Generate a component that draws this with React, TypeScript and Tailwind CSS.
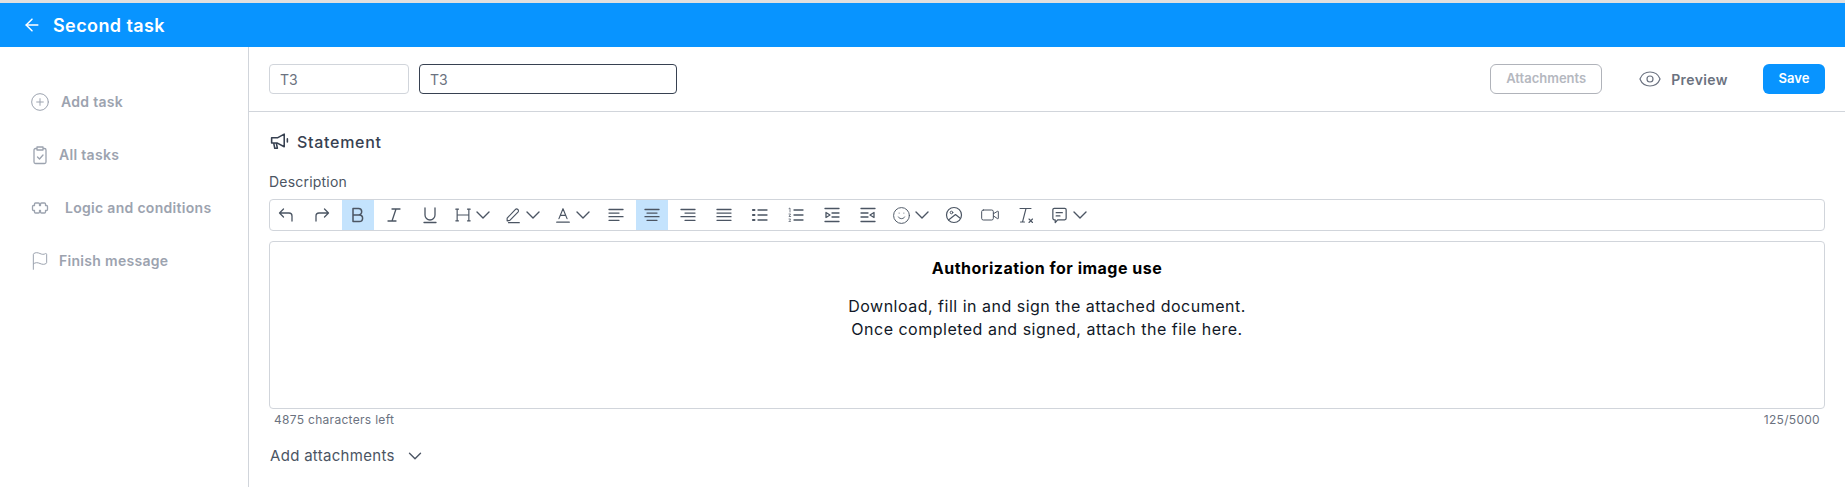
import type { ReactNode } from "react";
import { ArrowLeft, ChevronDown, CirclePlus, Eye, Flag, Smile, Video } from "lucide-react";

const Ico = ({ children, size = 20, color = "#4b5563" }: { children: ReactNode; size?: number; color?: string }) => (
  <svg
    width={size}
    height={size}
    viewBox="0 0 20 20"
    fill="none"
    stroke={color}
    strokeWidth="1.3"
    strokeLinecap="round"
    strokeLinejoin="round"
    className="shrink-0"
  >
    {children}
  </svg>
);

const Lines = ({ rows }: { rows: [number, number][] }) => (
  <Ico>
    {rows.map(([a, b], i) => (
      <path key={i} d={`M${a} ${4.5 + i * 3.6}H${b}`} />
    ))}
  </Ico>
);

const Chevron = () => (
  <ChevronDown size={24} strokeWidth={1.4} color="#4b5563" className="-ml-[1px] shrink-0" />
);

const ToolButton = ({
  children,
  active,
  wide,
}: {
  children: ReactNode;
  active?: boolean;
  wide?: boolean;
}) => (
  <div
    className={`flex h-[30px] items-center justify-center ${wide ? "w-[46px] pl-[3px]" : "w-8"} ${
      active ? "bg-[#c4e3fd]" : ""
    }`}
  >
    {children}
  </div>
);

const Toolbar = () => (
  <div className="flex h-8 items-center gap-1 rounded border border-[#d1d5db]">
    <ToolButton>
      <Ico>
        <path d="M3.500 8 7.500 4M3.500 8l4 4M3.500 8H13a3 3 0 0 1 3 3v5" />
      </Ico>
    </ToolButton>
    <ToolButton>
      <Ico>
        <path d="M16.500 8l-4-4M16.500 8l-4 4M16.500 8H7a3 3 0 0 0-3 3v5" />
      </Ico>
    </ToolButton>
    <ToolButton active>
      <Ico>
        <path d="M5 3.500h5.500a3.200 3.200 0 0 1 0 6.400H5zM5 9.900h6.300a3.300 3.300 0 0 1 0 6.600H5z" strokeWidth="1.5" />
      </Ico>
    </ToolButton>
    <ToolButton>
      <Ico>
        <path d="M8 4h8M4 16h8M12 4 8 16" />
      </Ico>
    </ToolButton>
    <ToolButton>
      <Ico>
        <path d="M5 3v7a5 5 0 0 0 10 0V3M4 17.500h12" />
      </Ico>
    </ToolButton>
    <ToolButton wide>
      <Ico size={18}>
        <path d="M3.500 3.500v13M16.500 3.500v13M3.500 10h13M2 3.500h3M2 16.500h3M15 3.500h3M15 16.500h3" />
      </Ico>
      <Chevron />
    </ToolButton>
    <ToolButton wide>
      <Ico size={18}>
        <path d="M3.500 13.500 12.500 4a2 2 0 0 1 3 2.800L6.500 16l-3 .5zM5 18.500h12" />
      </Ico>
      <Chevron />
    </ToolButton>
    <ToolButton wide>
      <Ico size={18}>
        <path d="M5.500 14 10 3 14.500 14M7 10.500h6M3 18h14" />
      </Ico>
      <Chevron />
    </ToolButton>
    <ToolButton>
      <Lines rows={[[3, 17], [3, 13], [3, 17], [3, 13]]} />
    </ToolButton>
    <ToolButton active>
      <Lines rows={[[3, 17], [5, 15], [3, 17], [5, 15]]} />
    </ToolButton>
    <ToolButton>
      <Lines rows={[[3, 17], [7, 17], [3, 17], [7, 17]]} />
    </ToolButton>
    <ToolButton>
      <Lines rows={[[3, 17], [3, 17], [3, 17], [3, 17]]} />
    </ToolButton>
    <ToolButton>
      <Ico>
        <path d="M8 5h9M8 10h9M8 15h9" />
        <path d="M3 5h1.400M3 10h1.400M3 15h1.400" strokeWidth="2.200" />
      </Ico>
    </ToolButton>
    <ToolButton>
      <Ico>
        <path d="M8 5h9M8 10h9M8 15h9" />
        <path d="M3 3.500 4 3v4M3 9h1.600L3 11.500h1.700M3 14h1.600l-.8 1.200.8 1.300H3" strokeWidth="0.700" />
      </Ico>
    </ToolButton>
    <ToolButton>
      <Ico>
        <path d="M3 3.500h14M10 8h7M10 12h7M3 16.500h14M4 7.500l4 2.500-4 2.500z" />
      </Ico>
    </ToolButton>
    <ToolButton>
      <Ico>
        <path d="M3 3.500h14M3 8h7M3 12h7M3 16.500h14M16 7.500l-4 2.500 4 2.500z" />
      </Ico>
    </ToolButton>
    <ToolButton wide>
      <Smile size={19} strokeWidth={1.2} color="#4b5563" className="shrink-0" />
      <Chevron />
    </ToolButton>
    <ToolButton>
      <Ico>
        <circle cx="10" cy="10" r="7.500" strokeWidth="1.200" />
        <circle cx="7.500" cy="7.500" r="1.300" strokeWidth="1" />
        <path d="M4.500 15 11.500 9.500 16.500 13.500" strokeWidth="1.100" />
      </Ico>
    </ToolButton>
    <ToolButton>
      <Video size={20} strokeWidth={1.2} color="#4b5563" />
    </ToolButton>
    <ToolButton>
      <Ico>
        <path d="M4 3.500h11M10 3.500 6.500 17M4.500 17h4M13 14l3.500 3.500M16.500 14 13 17.500" strokeWidth="1.100" />
      </Ico>
    </ToolButton>
    <ToolButton wide>
      <Ico size={19}>
        <path d="M4.500 2.500h11A1.500 1.500 0 0 1 17 4v9a1.500 1.500 0 0 1-1.500 1.500H8l-2.500 3v-3h-1A1.500 1.500 0 0 1 3 13V4a1.500 1.500 0 0 1 1.500-1.500zM6.500 7h6.500M6.500 10.500h4" />
      </Ico>
      <Chevron />
    </ToolButton>
  </div>
);

const NavItem = ({ icon, label, gap }: { icon: ReactNode; label: string; gap: string }) => (
  <div className={`flex h-[53px] items-center ${gap} text-[14px] font-semibold tracking-[0.3px] text-[#9ca3af]`}>
    {icon}
    <span>{label}</span>
  </div>
);

export default function App() {
  return (
    <div className="flex h-[487px] flex-col overflow-hidden bg-white font-['Inter','Liberation_Sans',sans-serif] text-[#374151]">
      <div className="h-[3px] shrink-0 bg-[#e0e0e0]" />
      <div className="flex h-[44px] shrink-0 items-center gap-[11px] bg-[#0894ff] pl-[22px] text-white">
        <ArrowLeft size={20} strokeWidth={1.8} />
        <span className="text-[18px] font-semibold tracking-[0.4px]">Second task</span>
      </div>
      <div className="flex min-h-0 flex-1">
        <aside className="w-[249px] shrink-0 border-r border-[#d1d5db] pl-[30px] pt-[28px]">
          <NavItem gap="gap-[11px]" label="Add task" icon={<CirclePlus size={20} strokeWidth={1.2} />} />
          <NavItem
            gap="gap-[9px]"
            label="All tasks"
            icon={
              <Ico color="#9ca3af">
                <path d="M7 3.500H5.500A1.500 1.500 0 0 0 4 5v12a1.500 1.500 0 0 0 1.500 1.500h9A1.500 1.500 0 0 0 16 17V5a1.500 1.500 0 0 0-1.500-1.500H13M7 2h6v3H7zM7.500 12l2 2 3.500-4" />
              </Ico>
            }
          />
          <NavItem
            gap="gap-[15px]"
            label="Logic and conditions"
            icon={
              <Ico color="#9ca3af">
                <path d="M4.500 7.500V6a1 1 0 0 1 1-1h3a1 1 0 0 1 1 1v1.500h1V6a1 1 0 0 1 1-1h3a1 1 0 0 1 1 1v1.500h1a1 1 0 0 1 1 1v3a1 1 0 0 1-1 1h-1V14a1 1 0 0 1-1 1h-3a1 1 0 0 1-1-1v-1.500h-1V14a1 1 0 0 1-1 1h-3a1 1 0 0 1-1-1v-1.500h-1a1 1 0 0 1-1-1v-3a1 1 0 0 1 1-1z" />
              </Ico>
            }
          />
          <NavItem gap="gap-[9px]" label="Finish message" icon={<Flag size={20} strokeWidth={1.2} />} />
        </aside>
        <main className="min-w-0 flex-1">
          <div className="flex h-[65px] items-center border-b border-[#d1d5db] pl-[20px] pr-[20px]">
            <div className="flex h-[30px] w-[140px] items-center rounded border border-[#d1d5db] px-[10px] text-[14px] text-[#6b7280]">
              T3
            </div>
            <div className="ml-[10px] flex h-[30px] w-[258px] items-center rounded border border-[#374151] px-[10px] text-[14px] text-[#6b7280]">
              T3
            </div>
            <div className="ml-auto flex h-[30px] w-[112px] items-center justify-center rounded-md border border-[#b0b3ba] text-[13px] font-semibold text-[#b5b8bf]">
              Attachments
            </div>
            <div className="ml-[36px] flex items-center gap-[9px] text-[14px] font-semibold tracking-[0.4px] text-[#6b7280]">
              <Eye size={24} strokeWidth={1.2} />
              Preview
            </div>
            <div className="ml-[35px] flex h-[30px] w-[62px] items-center justify-center rounded-md bg-[#0894ff] text-[13px] font-semibold text-white">
              Save
            </div>
          </div>
          <div className="pl-[20px] pr-[20px]">
            <div className="flex h-[59px] items-center gap-[7px] text-[16px] font-medium tracking-[0.7px]">
              <Ico size={21} color="#374151">
                <path d="M2.500 6.500H8L14.500 3V15L8 11.500H2.500zM4.500 11.500l1 5h2.500l-1-5M17.500 7.500v3" strokeWidth="1.500" />
              </Ico>
              Statement
            </div>
            <div className="text-[14px] leading-[21px] tracking-[0.2px] text-[#4b5563]">Description</div>
            <div className="mt-[7px]">
              <Toolbar />
            </div>
            <div className="mt-[10px] flex h-[168px] flex-col items-center rounded border border-[#d1d5db] pt-[15px] text-center text-[16px] leading-[23px] tracking-[0.5px] text-[#111827]">
              <div className="mb-[15px] font-bold text-black">Authorization for image use</div>
              <div>Download, fill in and sign the attached document.</div>
              <div>Once completed and signed, attach the file here.</div>
            </div>
            <div className="mt-[3px] flex justify-between px-[5px] text-[12px] leading-4 tracking-[0.3px] text-[#6b7280]">
              <span>4875 characters left</span>
              <span>125/5000</span>
            </div>
            <div className="mt-[17px] flex items-center gap-[9px] pl-[1px] text-[15px] tracking-[0.3px] text-[#4b5563]">
              Add attachments
              <ChevronDown size={22} strokeWidth={1.5} />
            </div>
          </div>
        </main>
      </div>
    </div>
  );
}
